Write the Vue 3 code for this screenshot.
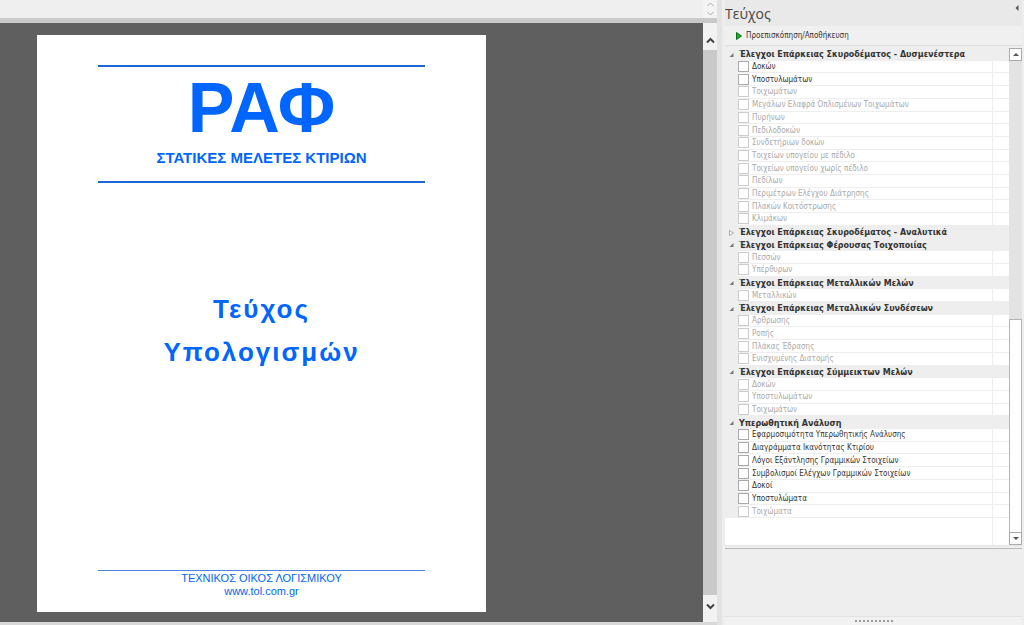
<script setup>
import { reactive } from 'vue'

const item = (label, enabled = false) => ({ label, enabled, checked: false })

const groups = reactive([
  {
    title: 'Έλεγχοι Επάρκειας Σκυροδέματος - Δυσμενέστερα',
    open: true,
    items: [
      item('Δοκών', true),
      item('Υποστυλωμάτων', true),
      item('Τοιχωμάτων'),
      item('Μεγάλων Ελαφρά Οπλισμένων Τοιχωμάτων'),
      item('Πυρήνων'),
      item('Πεδιλοδοκών'),
      item('Συνδετήριων δοκών'),
      item('Τοιχείων υπογείου με πέδιλο'),
      item('Τοιχείων υπογείου χωρίς πέδιλο'),
      item('Πεδίλων'),
      item('Περιμέτρων Ελέγχου Διάτρησης'),
      item('Πλακών Κοιτόστρωσης'),
      item('Κλιμάκων'),
    ],
  },
  { title: 'Έλεγχοι Επάρκειας Σκυροδέματος - Αναλυτικά', open: false, items: [] },
  {
    title: 'Έλεγχοι Επάρκειας Φέρουσας Τοιχοποιίας',
    open: true,
    items: [item('Πεσσών'), item('Υπέρθυρων')],
  },
  {
    title: 'Έλεγχοι Επάρκειας Μεταλλικών Μελών',
    open: true,
    items: [item('Μεταλλικών')],
  },
  {
    title: 'Έλεγχοι Επάρκειας Μεταλλικών Συνδέσεων',
    open: true,
    items: [item('Άρθρωσης'), item('Ροπής'), item('Πλάκας Έδρασης'), item('Ενισχυμένης Διατομής')],
  },
  {
    title: 'Έλεγχοι Επάρκειας Σύμμεικτων Μελών',
    open: true,
    items: [item('Δοκών'), item('Υποστυλωμάτων'), item('Τοιχωμάτων')],
  },
  {
    title: 'Υπερωθητική Ανάλυση',
    open: true,
    items: [
      item('Εφαρμοσιμότητα Υπερωθητικής Ανάλυσης', true),
      item('Διαγράμματα Ικανότητας Κτιρίου', true),
      item('Λόγοι Εξάντλησης Γραμμικών Στοιχείων', true),
      item('Συμβολισμοί Ελέγχων Γραμμικών Στοιχείων', true),
      item('Δοκοί', true),
      item('Υποστυλώματα', true),
      item('Τοιχώματα'),
    ],
  },
])
</script>

<template>
  <div class="app">
    <main class="viewer">
      <div class="strip">
        <div class="strip-buttons">
          <button type="button" aria-label="Πάνω">
            <svg width="7" height="5" viewBox="0 0 7 5"><path d="M0.5 4 3.5 1l3 3" /></svg>
          </button>
          <button type="button" aria-label="Κάτω">
            <svg width="7" height="5" viewBox="0 0 7 5"><path d="M0.5 1 3.5 4l3-3" /></svg>
          </button>
        </div>
      </div>
      <div class="stage">
        <div class="canvas">
          <article class="sheet">
            <header class="brand">
              <h1>ΡΑΦ</h1>
              <p>ΣΤΑΤΙΚΕΣ ΜΕΛΕΤΕΣ ΚΤΙΡΙΩΝ</p>
            </header>
            <h2>Τεύχος<br />Υπολογισμών</h2>
            <footer>
              <div>ΤΕΧΝΙΚΟΣ ΟΙΚΟΣ ΛΟΓΙΣΜΙΚΟΥ</div>
              <div>www.tol.com.gr</div>
            </footer>
          </article>
        </div>
        <div class="page-scroll">
          <button type="button" aria-label="Κύλιση πάνω">
            <svg width="9" height="7" viewBox="0 0 9 7"><path d="M1 5.5 4.5 2 8 5.5" /></svg>
          </button>
          <div class="page-thumb"></div>
          <button type="button" aria-label="Κύλιση κάτω">
            <svg width="9" height="7" viewBox="0 0 9 7"><path d="M1 1.5 4.5 5 8 1.5" /></svg>
          </button>
        </div>
      </div>
    </main>

    <aside class="panel">
      <div class="panel-title">
        <h3>Τεύχος</h3>
        <button type="button" aria-label="Σύμπτυξη">
          <svg width="4" height="6" viewBox="0 0 4 6"><path d="M3.5 0v6L0.5 3z" fill="#555" /></svg>
        </button>
      </div>
      <div class="toolbar">
        <button type="button" class="preview">
          <svg width="6" height="8" viewBox="0 0 6 8">
            <path d="M0.5 0.5 5.5 4l-5 3.5z" fill="#1fae2c" stroke="#0c6d18" />
          </svg>
          <span>Προεπισκόπηση/Αποθήκευση</span>
        </button>
      </div>
      <div class="list">
        <div class="tree">
          <div class="rows">
            <template v-for="(g, gi) in groups" :key="gi">
              <button type="button" class="group" :aria-expanded="g.open" @click="g.open = !g.open">
                <svg width="5" height="6" viewBox="0 0 5 6">
                  <path v-if="g.open" d="M4.5 1v4H0.5z" fill="#777" />
                  <path v-else d="M0.5 0.5 4.5 3l-4 2.5z" fill="#fff" stroke="#aaa" />
                </svg>
                <span>{{ g.title }}</span>
              </button>
              <template v-if="g.open">
                <label
                  v-for="(it, i) in g.items"
                  :key="i"
                  class="row"
                  :class="{ off: !it.enabled }"
                >
                  <input v-model="it.checked" type="checkbox" :disabled="!it.enabled" />
                  <span class="name">{{ it.label }}</span>
                  <span class="cell"></span>
                </label>
              </template>
            </template>
          </div>
          <div class="rest"></div>
        </div>
        <div class="tree-scroll">
          <button type="button" aria-label="Κύλιση λίστας πάνω">
            <svg width="6" height="3" viewBox="0 0 6 3"><path d="M0 3 3 0l3 3z" fill="#555" /></svg>
          </button>
          <div class="track"></div>
          <div class="thumb"></div>
          <button type="button" aria-label="Κύλιση λίστας κάτω">
            <svg width="6" height="3" viewBox="0 0 6 3"><path d="M0 0h6L3 3z" fill="#555" /></svg>
          </button>
        </div>
      </div>
      <div class="notes"></div>
      <div class="grip">
        <svg width="38" height="2" viewBox="0 0 38 2">
          <path d="M0 1h38" stroke="#999" stroke-width="2" stroke-dasharray="2 2" />
        </svg>
      </div>
    </aside>
  </div>
</template>

<style>
body {
  margin: 0;
  background: #eee;
}
</style>

<style scoped>
.app {
  display: flex;
  height: 100vh;
  background: #eee;
  font-family: 'Liberation Sans', Arial, sans-serif;
  overflow: hidden;
}
button {
  display: flex;
  align-items: center;
  justify-content: center;
  margin: 0;
  padding: 0;
  border: 0;
  background: none;
  font: inherit;
  color: inherit;
}
h1,
h2,
h3,
p {
  margin: 0;
}

.viewer {
  flex: 1;
  min-width: 0;
  display: flex;
  flex-direction: column;
  border-bottom: 3px solid #d8d8d8;
  box-sizing: border-box;
}
.strip {
  height: 18px;
  display: flex;
  justify-content: flex-end;
  background: #efefef;
  border-bottom: 5px solid #c9c9c9;
}
.strip-buttons {
  width: 14px;
  display: flex;
  flex-direction: column;
  justify-content: space-around;
  align-items: center;
  background: #f4f4f4;
}
.strip-buttons path {
  fill: none;
  stroke: #aaa;
}
.stage {
  flex: 1;
  display: flex;
  min-height: 0;
  background: #5f5f5f;
}
.canvas {
  flex: 1;
  display: flex;
  padding: 12px 0 10px 37px;
}
.sheet {
  width: 449px;
  box-sizing: border-box;
  padding: 30px 61px 14px;
  display: flex;
  flex-direction: column;
  background: #fff;
  color: #0066ff;
  text-align: center;
}
.brand {
  border-top: 2px solid #1d66d8;
  border-bottom: 2px solid #1d66d8;
  padding: 0 0 14px;
}
.brand h1 {
  font-size: 70px;
  line-height: 82px;
}
.brand p {
  font-size: 15px;
  line-height: 18px;
  font-weight: bold;
}
h2 {
  margin-top: 105px;
  font-size: 26px;
  line-height: 43px;
  letter-spacing: 2px;
}
footer {
  margin-top: auto;
  padding-top: 1px;
  border-top: 1px solid #4a86e0;
  font-size: 11px;
  line-height: 13px;
}
.page-scroll {
  width: 14px;
  display: flex;
  flex-direction: column;
  background: #f2f2f2;
}
.page-scroll button {
  height: 27px;
  padding-bottom: 4px;
}
.page-scroll button:first-child {
  padding: 8px 0 0;
}
.page-scroll path {
  fill: none;
  stroke: #444;
  stroke-width: 2;
}
.page-thumb {
  flex: 1;
  background: #c9c9c9;
}

.panel {
  width: 307px;
  box-sizing: border-box;
  padding: 0 2px 0 3px;
  border-left: 5px solid #e3e3e3;
  display: flex;
  flex-direction: column;
  color: #333;
  font-family: 'DejaVu Sans Condensed', Roboto, sans-serif;
}
.panel-title {
  height: 26px;
  display: flex;
  justify-content: space-between;
  background: #e9e9e9;
}
.panel-title h3 {
  font: 14px/28px 'Open Sans', 'Noto Sans', sans-serif;
  color: #444;
}
.panel-title button {
  height: 16px;
  padding-right: 3px;
}
.toolbar {
  height: 19px;
  display: flex;
  border-bottom: 1px solid #ddd;
  background: #f0f0f0;
}
.preview {
  gap: 4px;
  padding-left: 11px;
  font-size: 8px;
}
.list {
  height: 497px;
  padding-top: 2px;
  display: flex;
  border-bottom: 1px solid #e4e4e4;
}
.tree {
  flex: 1;
  min-width: 0;
  display: flex;
  flex-direction: column;
  background: #fff;
}
.rows {
  flex: 1;
  display: grid;
  grid-auto-rows: minmax(0, 1fr);
}
.group {
  min-height: 0;
  justify-content: flex-start;
  gap: 5px;
  padding: 1px 0 0 4px;
  background: #eee;
  font: bold 8px/11px 'DejaVu Sans', Verdana, sans-serif;
  color: #333;
  white-space: nowrap;
}
.row {
  min-height: 0;
  display: flex;
  align-items: center;
  box-sizing: border-box;
  border-left: 13px solid #eee;
  border-bottom: 1px solid #eee;
  font-size: 8px;
  line-height: 10px;
  white-space: nowrap;
}
.row.off {
  color: #aaa;
}
.row input {
  appearance: none;
  box-sizing: border-box;
  width: 11px;
  height: 11px;
  margin: 0 3px 0 0;
  border: 1px solid #aaa;
  background: #fff;
}
.row.off input {
  border-color: #ccc;
}
.row input:checked {
  background: #666;
}
.name {
  flex: 1;
  padding-top: 1px;
}
.cell {
  align-self: stretch;
  width: 16px;
  border-left: 1px solid #eee;
}
.rest {
  height: 27px;
  margin-right: 16px;
  border-right: 1px solid #eee;
}
.tree-scroll {
  width: 13px;
  box-sizing: border-box;
  display: flex;
  flex-direction: column;
  background: #e3e3e3;
}
.tree-scroll button {
  height: 13px;
  box-sizing: border-box;
  border: 1px solid #aaa;
  background: #fff;
}
.track {
  flex: 259;
}
.thumb {
  flex: 213;
  border: 1px solid #b5b5b5;
  border-bottom: 0;
  background: #fff;
}
.notes {
  flex: 1;
  margin-top: 2px;
  border-top: 1px solid #bbb;
  border-bottom: 1px solid #e2e2e2;
  background: #eee;
}
.grip {
  height: 8px;
  display: flex;
  align-items: center;
  justify-content: center;
  background: #f2f2f2;
}
</style>
